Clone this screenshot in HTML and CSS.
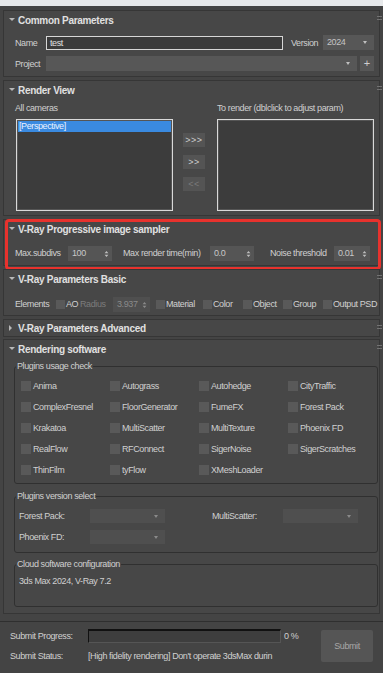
FILE: index.html
```html
<!DOCTYPE html>
<html>
<head>
<meta charset="utf-8">
<link rel="stylesheet" href="styles.css">
</head>
<body>
<div class="topstrip"></div>
<div class="panel">

  <section class="rollout">
    <div class="rhead"><span class="tri"></span>Common Parameters</div>
    <span class="handle"></span>
    <div class="rbody common">
      <div class="row">
        <span class="lbl lw31">Name</span>
        <div class="textbox">test</div>
        <span class="lbl verlbl">Version</span>
        <div class="dropdown ver">2024<span class="arrow"></span></div>
      </div>
      <div class="row">
        <span class="lbl lw31">Project</span>
        <div class="dropdown proj"><span class="arrow"></span></div>
        <div class="plus">+</div>
      </div>
    </div>
  </section>

  <section class="rollout">
    <div class="rhead"><span class="tri"></span>Render View</div>
    <span class="handle"></span>
    <div class="rbody rview">
      <span class="lbl">All cameras</span>
      <span></span>
      <span class="lbl">To render (dblclick to adjust param)</span>
      <div class="listbox left"><div class="sel">[Perspective]</div></div>
      <div class="movebtns">
        <div class="btn">&gt;&gt;&gt;</div>
        <div class="btn">&gt;&gt;</div>
        <div class="btn dis">&lt;&lt;</div>
      </div>
      <div class="listbox"></div>
    </div>
  </section>

  <section class="rollout prog">
    <div class="rhead"><span class="tri"></span>V-Ray Progressive image sampler</div>
    <div class="rbody row progrow">
      <span class="lbl lw53">Max.subdivs</span>
      <div class="spin w44">100<svg class="sp" width="5" height="8" viewBox="0 0 5 8"><path d="M0.6 3.2 L2.5 1 L4.4 3.2Z M0.6 4.8 L2.5 7 L4.4 4.8Z" fill="#bdbdbd"/></svg></div>
      <span class="lbl lw87 ml11">Max render time(min)</span>
      <div class="spin w44">0.0<svg class="sp" width="5" height="8" viewBox="0 0 5 8"><path d="M0.6 3.2 L2.5 1 L4.4 3.2Z M0.6 4.8 L2.5 7 L4.4 4.8Z" fill="#bdbdbd"/></svg></div>
      <span class="lbl lw64 ml16">Noise threshold</span>
      <div class="spin w36">0.01<svg class="sp" width="5" height="8" viewBox="0 0 5 8"><path d="M0.6 3.2 L2.5 1 L4.4 3.2Z M0.6 4.8 L2.5 7 L4.4 4.8Z" fill="#bdbdbd"/></svg></div>
    </div>
    <span class="redbox"></span>
  </section>

  <section class="rollout">
    <div class="rhead"><span class="tri"></span>V-Ray Parameters Basic</div>
    <span class="handle"></span>
    <div class="rbody row basicrow">
      <span class="lbl lw41">Elements</span>
      <span class="chk w24"><span class="cb small"></span>AO</span>
      <span class="lbl lw33 dim">Radius</span>
      <div class="spin w37 dimspin">3.937<svg class="sp" width="5" height="8" viewBox="0 0 5 8"><path d="M0.6 3.2 L2.5 1 L4.4 3.2Z M0.6 4.8 L2.5 7 L4.4 4.8Z" fill="#8a8a8a"/></svg></div>
      <span class="chk w47 ml6"><span class="cb small"></span>Material</span>
      <span class="chk w40"><span class="cb small"></span>Color</span>
      <span class="chk w40"><span class="cb small"></span>Object</span>
      <span class="chk w40"><span class="cb small"></span>Group</span>
      <span class="chk"><span class="cb small"></span>Output PSD</span>
    </div>
  </section>

  <section class="rollout adv">
    <div class="rhead"><span class="tri closed"></span>V-Ray Parameters Advanced</div>
    <span class="handle"></span>
  </section>

  <section class="rollout">
    <div class="rhead"><span class="tri"></span>Rendering software</div>
    <span class="handle"></span>
    <div class="rbody rsoft">
      <fieldset class="grp">
        <legend>Plugins usage check</legend>
        <div class="plugins">
          <span class="chk"><span class="cb"></span>Anima</span>
          <span class="chk"><span class="cb"></span>Autograss</span>
          <span class="chk"><span class="cb"></span>Autohedge</span>
          <span class="chk"><span class="cb"></span>CityTraffic</span>
          <span class="chk"><span class="cb"></span>ComplexFresnel</span>
          <span class="chk"><span class="cb"></span>FloorGenerator</span>
          <span class="chk"><span class="cb"></span>FumeFX</span>
          <span class="chk"><span class="cb"></span>Forest Pack</span>
          <span class="chk"><span class="cb"></span>Krakatoa</span>
          <span class="chk"><span class="cb"></span>MultiScatter</span>
          <span class="chk"><span class="cb"></span>MultiTexture</span>
          <span class="chk"><span class="cb"></span>Phoenix FD</span>
          <span class="chk"><span class="cb"></span>RealFlow</span>
          <span class="chk"><span class="cb"></span>RFConnect</span>
          <span class="chk"><span class="cb"></span>SigerNoise</span>
          <span class="chk"><span class="cb"></span>SigerScratches</span>
          <span class="chk"><span class="cb"></span>ThinFilm</span>
          <span class="chk"><span class="cb"></span>tyFlow</span>
          <span class="chk"><span class="cb"></span>XMeshLoader</span>
        </div>
      </fieldset>
      <fieldset class="grp g2">
        <legend>Plugins version select</legend>
        <div class="versions">
          <span class="lbl">Forest Pack:</span>
          <div class="dropdown dd-dis"><span class="arrow"></span></div>
          <span></span>
          <span class="lbl">MultiScatter:</span>
          <div class="dropdown dd-dis"><span class="arrow"></span></div>
          <span class="lbl">Phoenix FD:</span>
          <div class="dropdown dd-dis"><span class="arrow"></span></div>
        </div>
      </fieldset>
      <fieldset class="grp g3">
        <legend>Cloud software configuration</legend>
        <div class="cloud">3ds Max 2024, V-Ray 7.2</div>
      </fieldset>
    </div>
  </section>

</div>

<div class="bottom">
  <span class="lbl">Submit Progress:</span>
  <div class="progress"></div>
  <span class="lbl pct">0 %</span>
  <div class="submit">Submit</div>
  <span class="lbl">Submit Status:</span>
  <div class="status">[High fidelity rendering] Don't operate 3dsMax durin</div>
</div>
</body>
</html>
```

FILE: styles.css
```css
* { box-sizing: border-box; margin: 0; padding: 0; }
html, body { background: #444444; }
body {
  font-family: "Liberation Sans", Arial, sans-serif;
  font-size: 9px;
  letter-spacing: -0.4px;
  color: #d0d0d0;
  width: 383px;
  height: 673px;
  overflow: hidden;
}
.topstrip { height: 6px; background: #e7e9eb; }
.panel { display: flex; flex-direction: column; padding: 4px 3px 0 3px; }

.rollout {
  position: relative;
  border: 1px solid #363636;
  background: #474747;
  margin-bottom: 3px;
}
.rollout.adv { margin-bottom: 2px; }
.rollout.adv .rhead { height: 16px; }
.rhead {
  height: 18px;
  display: flex;
  align-items: center;
  padding-left: 5px;
  font-weight: bold;
  font-size: 10px;
  letter-spacing: -0.3px;
  color: #e0e0e0;
}
.tri { width: 9px; height: 6px; position: relative; }
.tri::before {
  content: "";
  position: absolute;
  left: 0; top: 1px;
  border-left: 3px solid transparent;
  border-right: 3px solid transparent;
  border-top: 3px solid #b8b8b8;
}
.tri.closed::before {
  top: 0;
  border-top: 3px solid transparent;
  border-bottom: 3px solid transparent;
  border-left: 3px solid #b8b8b8;
  border-right: 0;
}
.handle {
  position: absolute;
  right: -3px; top: 5px;
  width: 5px; height: 4px;
  border-top: 1px solid #727272;
  border-bottom: 1px solid #727272;
}

.row { display: flex; align-items: center; height: 15px; }
.lbl { white-space: nowrap; }
.lw31 { width: 31px; }
.lw33 { width: 33px; }
.lw41 { width: 41px; }
.lw53 { width: 53px; }
.lw64 { width: 64px; }
.lw87 { width: 87px; }
.ml6 { margin-left: 6px; }
.ml11 { margin-left: 11px; }
.ml16 { margin-left: 16px; }
.dim { color: #7c7c7c; }

/* Common */
.common { padding: 6px 5px 5px 11px; display: flex; flex-direction: column; gap: 6px; }
.textbox {
  width: 237px; height: 14px;
  border: 1px solid #d6d6d6;
  background: #3b3b3b;
  padding-left: 3px;
  line-height: 12px;
  color: #e0e0e0;
}
.verlbl { margin-left: 8px; width: 32px; }
.dropdown {
  position: relative;
  height: 15px;
  background: #575757;
  padding-left: 4px;
  line-height: 15px;
  color: #c4c4c4;
}
.dropdown .arrow {
  position: absolute;
  right: 7px; top: 6px;
  border-left: 2.5px solid transparent;
  border-right: 2.5px solid transparent;
  border-top: 3px solid #c0c0c0;
}
.ver { width: 51px; }
.proj { width: 311px; }
.plus {
  margin-left: 3px;
  width: 14px; height: 15px;
  background: #575757;
  color: #cfcfcf;
  text-align: center;
  line-height: 14px;
  font-size: 11px;
  letter-spacing: 0;
}

/* Render view */
.rview {
  padding: 3px 5px 4px 11px;
  display: grid;
  grid-template-columns: 158px 44px 157px;
  grid-template-rows: 12px 92px;
  row-gap: 5px;
}
.rview > .lbl { line-height: 12px; }
.listbox {
  border: 1px solid #d9d9d9;
  box-shadow: inset 0 0 0 1px #555;
  background: #3c3c3c;
  padding: 1px;
}
.listbox.left { margin-left: 1px; }
.sel {
  height: 11px;
  background: #3a8ae0;
  color: #eaf2ff;
  line-height: 11px;
  padding-left: 1px;
}
.movebtns {
  display: flex; flex-direction: column; gap: 8px;
  padding: 14px 0 0 10px;
}
.btn {
  width: 22px; height: 14px;
  background: #545454;
  color: #cfcfcf;
  text-align: center;
  line-height: 14px;
  font-size: 9px;
  letter-spacing: 0.5px;
}
.btn.dis { color: #7a7a7a; }

/* Progressive */
.progrow { padding: 7px 0 4px 11px; height: auto; }
.progrow > * { height: 16px; line-height: 16px; }
.spin {
  position: relative;
  height: 15px;
  background: #555555;
  color: #c8c8c8;
  padding-left: 4px;
  line-height: 15px;
}
.spin .sp { position: absolute; right: 3px; top: 4px; }
.w44 { width: 44px; }
.w36 { width: 36px; }
.w37 { width: 37px; }
.dimspin { color: #8a8a8a; background: #4f4f4f; }
.redbox {
  position: absolute;
  left: 1px; right: -2px; top: -1px; bottom: -5px;
  border: 3px solid #e8322d;
  border-radius: 4px;
  pointer-events: none;
}

/* Basic */
.basicrow { padding: 8px 0 3px 11px; height: auto; }
.basicrow > * { height: 16px; line-height: 16px; }
.basicrow > .spin { height: 15px; line-height: 15px; }
.chk { display: flex; align-items: center; white-space: nowrap; }
.w24 { width: 24px; }
.w40 { width: 40px; }
.w47 { width: 47px; }
.cb {
  display: inline-block;
  width: 10px; height: 10px;
  background: #595959;
  margin-right: 2px;
  flex: none;
}
.cb.small { width: 9px; height: 9px; margin-right: 1px; }

/* Rendering software */
.rsoft { padding: 2px 1px 6px 10px; }
.grp {
  border: 1px solid #303030;
  border-radius: 3px;
  padding: 0;
  margin: 0;
  min-width: 0;
}
.grp legend {
  margin-left: 1px;
  padding: 0 1px;
  line-height: 12px;
  font-size: 9px;
  color: #d0d0d0;
}
.plugins {
  display: grid;
  grid-template-columns: repeat(4, 89px);
  grid-auto-rows: 21px;
  align-items: center;
  padding: 3px 0 3px 6px;
}
.g2 { margin-top: 6px; }
.versions {
  display: grid;
  grid-template-columns: 71px 75px 47px 71px 75px;
  grid-auto-rows: 21px;
  align-items: center;
  padding: 3px 0 5px 4px;
}
.dropdown.dd-dis { height: 14px; background: #4f4f4f; }
.dd-dis .arrow { border-top-color: #8a8a8a; top: 6px; }
.g3 { margin-top: 5px; }
.cloud { padding: 4px 0 18px 4px; line-height: 14px; }

/* Bottom */
.bottom {
  margin-top: 4px;
  border-top: 1px solid #2f2f2f;
  padding: 7px 0 0 10px;
  display: grid;
  grid-template-columns: 78px 193px 40px 52px;
  grid-template-rows: 14px 14px;
  row-gap: 6px;
  align-items: center;
}
.progress {
  height: 14px;
  background: #3e3e3e;
  border-top: 2px solid #111;
  border-left: 1px solid #111;
  border-right: 1px solid #555;
  border-bottom: 1px solid #555;
}
.pct { padding-left: 3px; align-self: center; }
.submit {
  grid-row: 1 / 3;
  grid-column: 4;
  align-self: start;
  margin-top: 1px;
  height: 32px;
  background: #555555;
  border-radius: 2px;
  color: #a8a8a8;
  text-align: center;
  line-height: 32px;
}
.status {
  white-space: nowrap;
  overflow: hidden;
  width: 193px;
}
```
